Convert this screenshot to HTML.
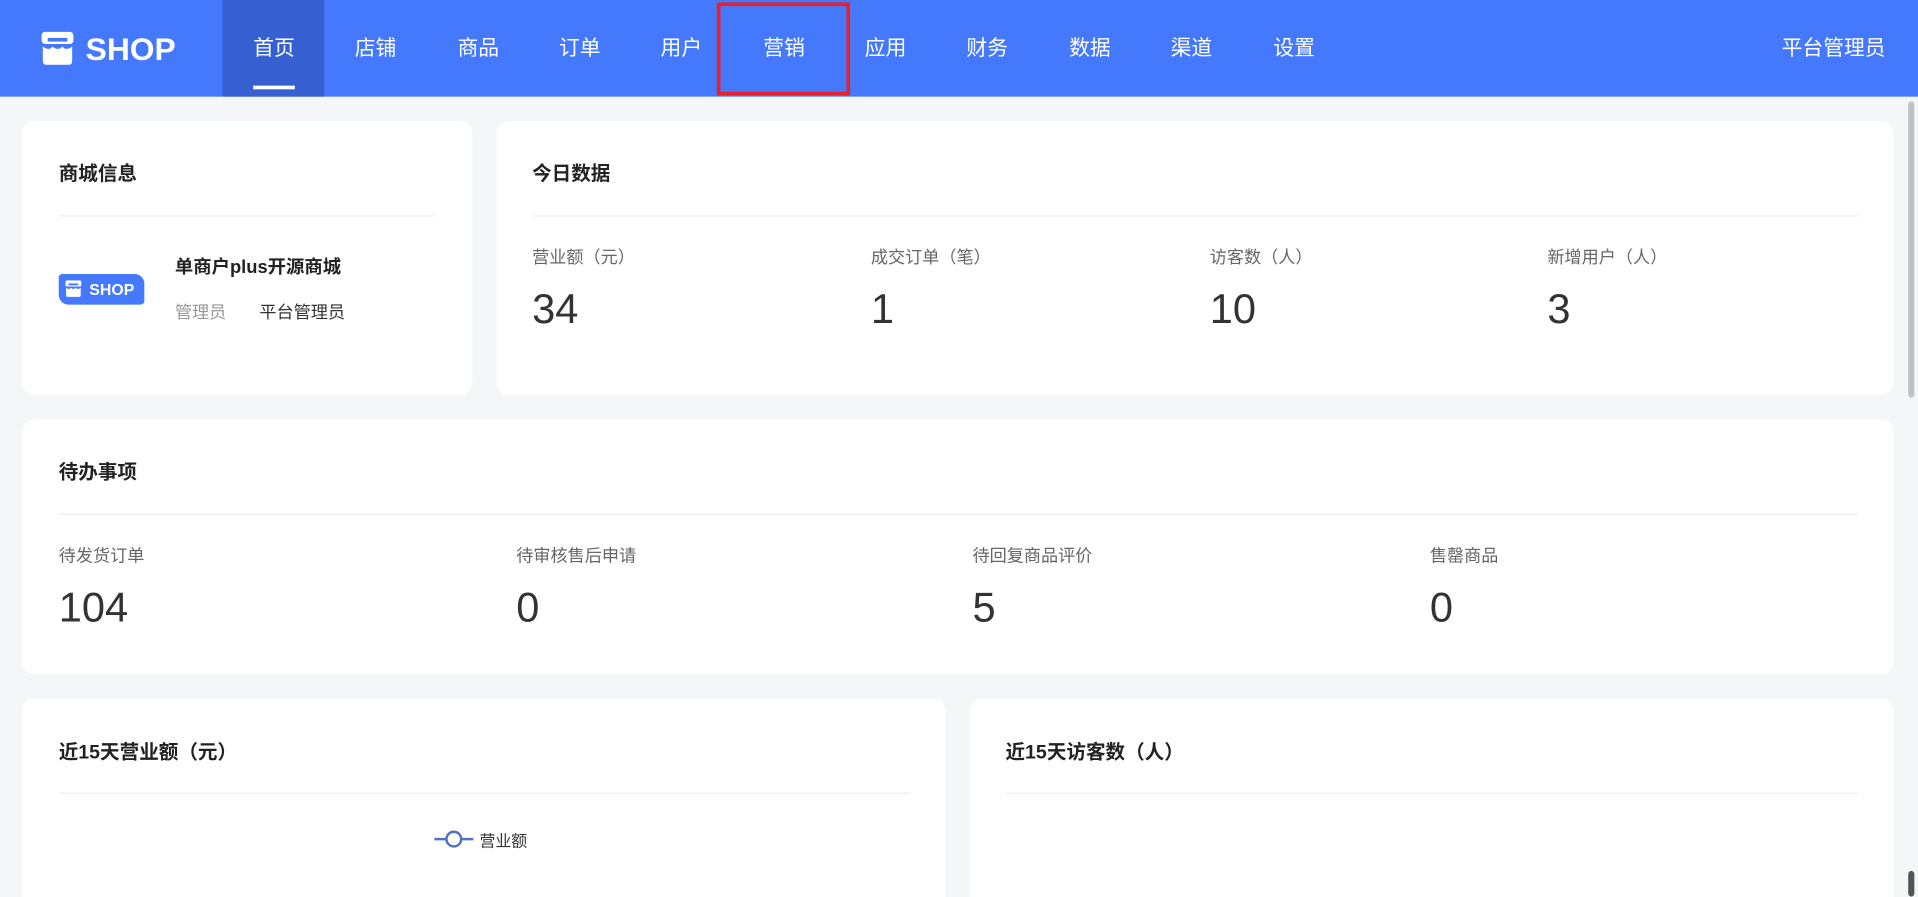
<!DOCTYPE html>
<html><head><meta charset="utf-8"><style>
*{margin:0;padding:0;box-sizing:border-box}
html,body{width:1918px;height:897px;overflow:hidden;background:#f5f6f8}
#w{width:1568px;height:733px;transform:scale(1.22321);transform-origin:0 0;position:relative;font-family:"Liberation Sans","Noto Sans CJK SC",sans-serif;color:#333}
#w div{white-space:nowrap}
.hd{position:absolute;left:0;top:0;width:1568px;height:79px;background:#4478fd}
.nav{position:absolute;top:0;height:79px;line-height:79px;color:#fff;font-size:17px;transform:translateX(-50%)}
.act{position:absolute;left:182px;top:0;width:83px;height:79px;background:#3660d2}
.card{position:absolute;background:#fff;border-radius:10px}
.t{position:absolute;font-size:16px;font-weight:bold;color:#222}
.hr{position:absolute;height:1px;background:#eef0f2}
.l{position:absolute;font-size:14px;color:#666}
.n{position:absolute;font-size:34px;color:#333}
</style></head><body><div id="w">
<div class="hd">
<svg style="position:absolute;left:33px;top:26px" width="28" height="27" viewBox="0 0 28 27"><rect x="1" y="0" width="26" height="10" rx="3" fill="#fff"/><rect x="6" y="5" width="16" height="3" fill="#4478fd"/><path d="M2 12 Q7 16 10 12 Q14 16 18 12 Q21 16 26 12 V24 Q26 27 23 27 H5 Q2 27 2 24Z" fill="#fff"/></svg>
<div style="position:absolute;left:70px;top:25px;font-size:26px;font-weight:bold;color:#fff">SHOP</div>
<div class="act"></div>
<div style="position:absolute;left:207px;top:70px;width:34px;height:3px;background:#fff"></div>
<div class="nav" style="left:224px">首页</div>
<div class="nav" style="left:307px">店铺</div>
<div class="nav" style="left:391px">商品</div>
<div class="nav" style="left:474px">订单</div>
<div class="nav" style="left:557px">用户</div>
<div class="nav" style="left:641px">营销</div>
<div class="nav" style="left:724px">应用</div>
<div class="nav" style="left:807px">财务</div>
<div class="nav" style="left:891px">数据</div>
<div class="nav" style="left:974px">渠道</div>
<div class="nav" style="left:1058px">设置</div>
<div style="position:absolute;left:586px;top:2px;width:109px;height:76px;border:3px solid #e8202a"></div>
<div class="nav" style="left:1499px">平台管理员</div>
</div>
<div style="position:absolute;left:1560px;top:83px;width:5px;height:242px;background:#c1c1c1;border-radius:3px"></div>
<div style="position:absolute;left:1560px;top:712px;width:5px;height:21px;background:#555;border-radius:3px"></div>

<div class="card" style="left:18px;top:99px;width:368px;height:224px"></div>
<div class="t" style="left:48px;top:128px">商城信息</div>
<div class="hr" style="left:48px;top:176px;width:307px"></div>
<div style="position:absolute;left:48px;top:224px;width:70px;height:25px;background:#4478fd;border-radius:3px 8px 3px 8px;color:#fff;font-size:13px;font-weight:bold;line-height:25px;padding-left:25px">SHOP</div>
<svg style="position:absolute;left:53px;top:229px" width="14" height="14" viewBox="0 0 28 27"><rect x="1" y="0" width="26" height="10" rx="3" fill="#fff"/><rect x="6" y="5" width="16" height="3" fill="#4478fd"/><path d="M2 12 Q7 16 10 12 Q14 16 18 12 Q21 16 26 12 V24 Q26 27 23 27 H5 Q2 27 2 24Z" fill="#fff"/></svg>
<div style="position:absolute;left:143px;top:207px;font-size:15px;font-weight:bold;color:#222">单商户plus开源商城</div>
<div style="position:absolute;left:143px;top:245px;font-size:14px;color:#999">管理员</div>
<div style="position:absolute;left:212px;top:245px;font-size:14px;color:#333">平台管理员</div>

<div class="card" style="left:406px;top:99px;width:1142px;height:224px"></div>
<div class="t" style="left:435px;top:128px">今日数据</div>
<div class="hr" style="left:435px;top:176px;width:1084px"></div>
<div class="l" style="left:435px;top:200px">营业额（元）</div><div class="n" style="left:435px;top:234px">34</div>
<div class="l" style="left:712px;top:200px">成交订单（笔）</div><div class="n" style="left:712px;top:234px">1</div>
<div class="l" style="left:989px;top:200px">访客数（人）</div><div class="n" style="left:989px;top:234px">10</div>
<div class="l" style="left:1265px;top:200px">新增用户（人）</div><div class="n" style="left:1265px;top:234px">3</div>

<div class="card" style="left:18px;top:343px;width:1530px;height:208px"></div>
<div class="t" style="left:48px;top:372px">待办事项</div>
<div class="hr" style="left:48px;top:420px;width:1471px"></div>
<div class="l" style="left:48px;top:444px">待发货订单</div><div class="n" style="left:48px;top:478px">104</div>
<div class="l" style="left:422px;top:444px">待审核售后申请</div><div class="n" style="left:422px;top:478px">0</div>
<div class="l" style="left:795px;top:444px">待回复商品评价</div><div class="n" style="left:795px;top:478px">5</div>
<div class="l" style="left:1169px;top:444px">售罄商品</div><div class="n" style="left:1169px;top:478px">0</div>

<div class="card" style="left:18px;top:571px;width:755px;height:180px"></div>
<div class="t" style="left:48px;top:601px">近15天营业额（元）</div>
<div class="hr" style="left:48px;top:648px;width:696px"></div>
<svg style="position:absolute;left:355px;top:678px" width="32" height="16"><line x1="0" y1="8" x2="32" y2="8" stroke="#5470c6" stroke-width="2"/><circle cx="16" cy="8" r="6" fill="#fff" stroke="#5470c6" stroke-width="2"/></svg>
<div style="position:absolute;left:392px;top:677px;font-size:13px;color:#333">营业额</div>

<div class="card" style="left:793px;top:571px;width:755px;height:180px"></div>
<div class="t" style="left:822px;top:601px">近15天访客数（人）</div>
<div class="hr" style="left:822px;top:648px;width:697px"></div>
</div></body></html>
